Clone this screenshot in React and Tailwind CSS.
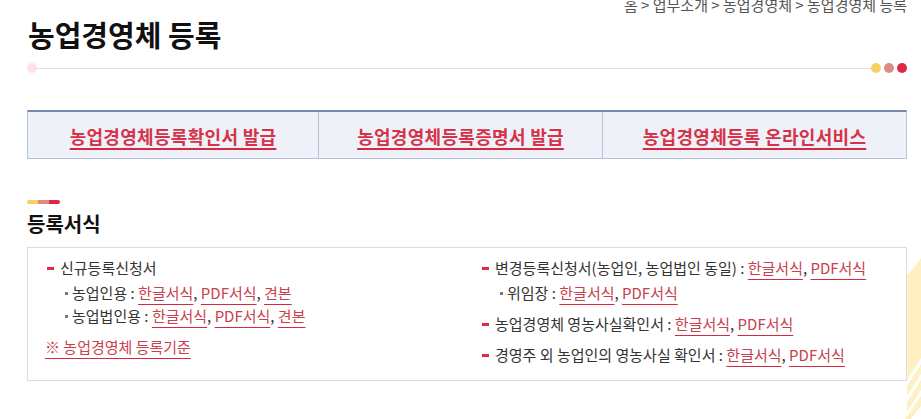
import React from 'react';

const FONT = { fontFamily: '"Noto Sans CJK KR", "Noto Sans", sans-serif' };

const Link = ({ children }) => (
  <a
    href="#"
    className="text-[#c9404e] underline decoration-[#d8283f] decoration-1 underline-offset-[5px]"
  >
    {children}
  </a>
);

const Forms = ({ extra }) => (
  <>
    <Link>한글서식</Link>, <Link>PDF서식</Link>
    {extra && (
      <>
        , <Link>견본</Link>
      </>
    )}
  </>
);

const Main = ({ children, className = '' }) => (
  <div className={`flex items-center h-[22px] ${className}`}>
    <span className="w-[7px] h-[3px] bg-[#dc2a47] mr-[6px] shrink-0" />
    <span className="whitespace-pre">{children}</span>
  </div>
);

const Sub = ({ children }) => (
  <div className="flex items-center h-[22px] pl-[18px]">
    <span className="w-[3px] h-[3px] bg-[#777] mr-[4px] shrink-0" />
    <span className="whitespace-pre">{children}</span>
  </div>
);

const tabs = ['농업경영체등록확인서 발급', '농업경영체등록증명서 발급', '농업경영체등록 온라인서비스'];

export default function App() {
  return (
    <div className="relative w-[921px] h-[419px] overflow-hidden bg-white text-[#333]" style={FONT}>
      {/* background decoration */}
      <svg className="absolute right-0 top-[258px]" width="16" height="161" viewBox="0 0 16 161">
        <polygon points="16,0 16,100 2,122 2,18" fill="#fff0c4" />
        <polygon points="16,106 16,116 2,138 2,128" fill="#fff0c4" />
        <polygon points="16,122 16,132 2,154 2,144" fill="#fff0c4" />
        <polygon points="16,138 16,148 6,161 0,161" fill="#fff0c4" />
      </svg>

      <div className="relative pl-[28px] pr-[14px]">
        <div className="flex justify-end -mt-[4px] text-[15px] leading-[18px] text-[#555]">
          홈 &gt; 업무소개 &gt; 농업경영체 &gt; 농업경영체 등록
        </div>
        <h1 className="mt-[3px] text-[29px] leading-[34px] font-bold text-[#111]">
          농업경영체 등록
        </h1>

        <div className="mt-[12px] flex items-center h-[10px]">
          <span className="w-[10px] h-[10px] rounded-full bg-[#fde1e5] -ml-[1px] shrink-0" />
          <span className="flex-1 h-px bg-[#f6d7da]" />
          <span className="w-[10px] h-[10px] rounded-full bg-[#f5d162] shrink-0" />
          <span className="w-[10px] h-[10px] rounded-full bg-[#e08a86] ml-[3px] shrink-0" />
          <span className="w-[10px] h-[10px] rounded-full bg-[#df2749] ml-[3px] shrink-0" />
        </div>

        <div className="mt-[37px] -ml-[1px] grid grid-cols-[290px_284px_1fr] h-[49px] bg-[#eef2f8] border border-[#b6c1dc] border-t-2 border-t-[#7c88ab]">
          {tabs.map((t, i) => (
            <div
              key={t}
              className={`flex items-center justify-center pt-[2px] ${i > 0 ? 'border-l border-[#b6c1dc]' : ''}`}
            >
              <a
                href="#"
                className="text-[18px] font-bold text-[#d6334a] tracking-[0.3px] underline decoration-[#d8283f] decoration-2 underline-offset-[4px]"
              >
                {t}
              </a>
            </div>
          ))}
        </div>

        <div className="mt-[41px] flex h-[4px] w-[33px] rounded-full overflow-hidden -ml-[1px]">
          <span className="flex-1 bg-[#f5d162]" />
          <span className="flex-1 bg-[#e08a86]" />
          <span className="flex-1 bg-[#df2749]" />
        </div>
        <h2 className="mt-[7px] text-[20px] leading-[26px] font-bold text-[#111] -ml-[1px]">등록서식</h2>

        <div className="mt-[10px] -ml-[1px] h-[134px] border border-[#dcdcdc] bg-white grid grid-cols-[435px_1fr] pl-[19px] pt-[9px] text-[15px]">
          <div>
            <Main>신규등록신청서</Main>
            <div className="mt-[3px] flex flex-col gap-[1px]">
              <Sub>
                농업인용 : <Forms extra />
              </Sub>
              <Sub>
                농업법인용 : <Forms extra />
              </Sub>
            </div>
            <div className="mt-[9px] h-[22px] flex items-center -ml-[2px]">
              <Link>※ 농업경영체 등록기준</Link>
            </div>
          </div>
          <div>
            <Main>
              변경등록신청서(농업인, 농업법인 동일) : <Forms />
            </Main>
            <div className="mt-[3px]">
              <Sub>
                위임장 : <Forms />
              </Sub>
            </div>
            <Main className="mt-[9px]">
              농업경영체 영농사실확인서 : <Forms />
            </Main>
            <Main className="mt-[9px]">
              경영주 외 농업인의 영농사실 확인서 : <Forms />
            </Main>
          </div>
        </div>
      </div>
    </div>
  );
}
